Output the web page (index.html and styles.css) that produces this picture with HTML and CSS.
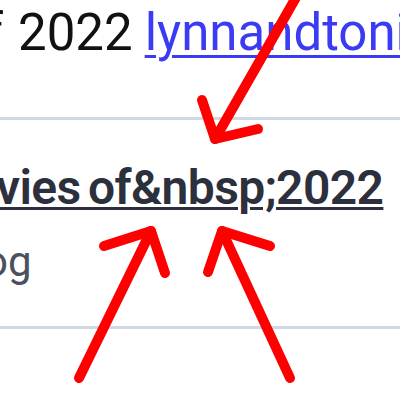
FILE: index.html
```html
<!DOCTYPE html>
<html lang="en">
<head>
<meta charset="utf-8">
<title>Best Movies of 2022</title>
<link rel="stylesheet" href="styles.css">
</head>
<body>
<main class="page">
  <p class="intro">
    <span class="lead lead-intro"><span>Best Movies of</span></span><span class="year">2022</span> <a class="link" href="#">lynnandtoni.blogspot.com</a>
  </p>
  <article class="card">
    <h2 class="title"><span class="lead lead-title"><span>Best Mo</span></span><a href="#">vies of&amp;nbsp;2022</a></h2>
    <p class="source"><span class="lead lead-source"><span>blo</span></span>g</p>
  </article>
  <div class="next"></div>
</main>
<svg class="arrows" width="400" height="400" viewBox="0 0 400 400" aria-hidden="true">
  <g fill="none" stroke="#ff0000" stroke-width="10" stroke-linecap="round" stroke-linejoin="round">
    <path d="M298 -6 L215 139"/>
    <path d="M202 100 L215 139 L258 129"/>
    <path d="M79 378 L151 231"/>
    <path d="M104 246 L151 231 L165 273"/>
    <path d="M290 378 L222 231"/>
    <path d="M270 246 L222 231 L208 272"/>
  </g>
</svg>
</body>
</html>
```
FILE: styles.css
```css
html, body {
  margin: 0;
  padding: 0;
  background: #ffffff;
}
body {
  width: 400px;
  height: 400px;
  overflow: hidden;
  position: relative;
  font-family: Roboto, "Liberation Sans", Arial, sans-serif;
}
.page {
  display: flex;
  flex-direction: column;
}
.intro {
  margin: 0;
  padding: 3px 0 0 0;
  height: 114px;
  font-size: 51px;
  line-height: 60px;
  color: #111111;
  white-space: nowrap;
  display: flex;
  align-items: baseline;
}
.lead {
  display: inline-flex;
  justify-content: flex-end;
  white-space: nowrap;
}
.lead-intro {
  width: 3px;
}
.intro .year {
  margin-left: 15px;
  margin-right: 12px;
}
.link {
  color: #3b3bf4;
  text-decoration: underline;
  text-decoration-thickness: 3px;
  text-underline-offset: 5px;
}
.card {
  border-top: 3px solid #cfd8e3;
  border-bottom: 3px solid #cfd8e3;
  padding: 40px 0 36px 0;
  white-space: nowrap;
}
.title {
  margin: 0;
  font-size: 48px;
  line-height: 56px;
  font-weight: 600;
  color: #2c303d;
  display: flex;
  align-items: baseline;
  word-spacing: -4px;
  letter-spacing: -0.6px;
}
.title a {
  color: inherit;
  text-decoration: underline;
  text-decoration-thickness: 3px;
  text-underline-offset: 3px;
}
.lead-title {
  width: 0;
  margin-left: -4px;
}
.source {
  margin: 18px 0 0 0;
  font-size: 42px;
  line-height: 56px;
  color: #4a5060;
  display: flex;
  align-items: baseline;
}
.lead-source {
  width: 8px;
}
.next {
  height: 80px;
}
.arrows {
  position: absolute;
  top: 0;
  left: 0;
  pointer-events: none;
}
```
